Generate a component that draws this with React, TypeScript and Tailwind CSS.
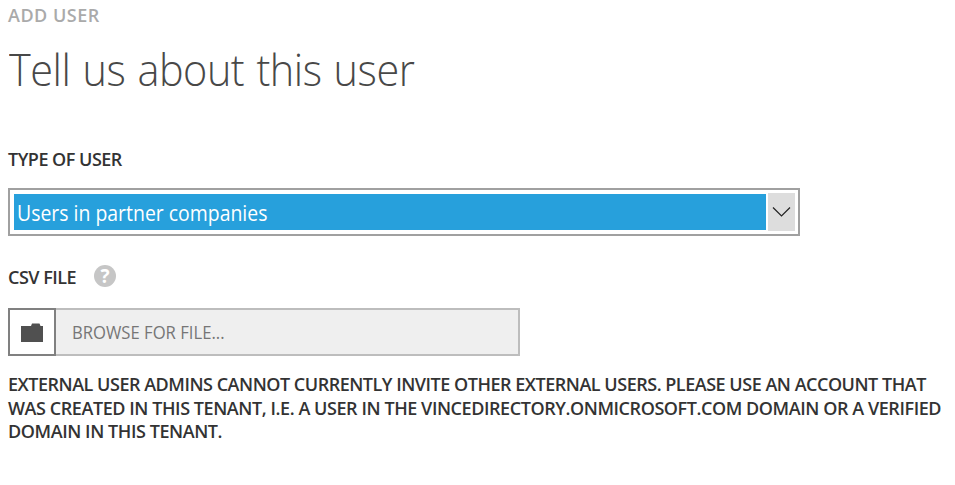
export default function App() {
  return (
    <main className="flex h-[485px] w-[955px] flex-col items-start overflow-hidden bg-white pl-2 font-['Open_Sans','Noto_Sans',sans-serif] whitespace-nowrap text-[#333]">
      <p className="mt-[3px] h-[25px] text-[18px] leading-6 font-semibold tracking-[0.5px] text-[#aaa]">ADD USER</p>
      <h1 className="mt-[9px] ml-px h-[65px] origin-left scale-x-[0.92] text-[45px] leading-[64px] font-light tracking-[-0.5px] text-[#484848] [word-spacing:2px]">
        Tell us about this user
      </h1>
      <label className="mt-[45px] h-[25px] text-[18px] leading-6 font-semibold tracking-[-0.5px]">TYPE OF USER</label>

      <button className="mt-4 flex h-12 w-[792px] items-stretch border-2 border-[#a0a0a0] bg-white p-[3px] text-left">
        <span className="my-px ml-px flex w-[752px] items-center bg-[#27a0dc] pt-0.5 pl-[3px] text-[21px] leading-6 text-white">
          <span className="origin-left scale-x-[0.925]">Users in partner companies</span>
        </span>
        <span className="ml-0.5 flex w-[27px] items-center justify-center bg-[#ddd]">
          <svg width="19" height="12" viewBox="0 0 19 12" fill="none" stroke="#222" strokeWidth="1.2">
            <path d="M1 1.5 9.5 10 18 1.5" />
          </svg>
        </span>
      </button>

      <div className="mt-[28px] flex h-6 items-center">
        <label className="w-[86px] pt-0.5 text-[18px] leading-6 font-semibold tracking-[-0.5px]">CSV FILE</label>
        <span className="flex h-[22px] w-[22px] items-center justify-center rounded-full bg-[#c6c6c6] text-[19px] leading-none font-bold text-white">
          ?
        </span>
      </div>

      <div className="mt-5 flex h-12 w-[512px]">
        <button className="flex w-12 items-center justify-center border-2 border-[#808080] bg-white">
          <svg width="22" height="19" viewBox="0 0 22 19" fill="#505050">
            <path d="M0 3h10l1-2.5h7.5l1 2.5H22v16H0z" />
          </svg>
        </button>
        <span className="flex flex-1 items-center border-2 border-l-0 border-[#bdbdbd] bg-[#efefef] pl-4 text-[18px] leading-6 text-[#767676]">
          <span className="origin-left scale-x-[0.925]">BROWSE FOR FILE...</span>
        </span>
      </div>

      <div className="mt-[17px] text-[18px] leading-[23.5px] font-semibold">
        <p className="tracking-[-0.48px]">EXTERNAL USER ADMINS CANNOT CURRENTLY INVITE OTHER EXTERNAL USERS. PLEASE USE AN ACCOUNT THAT</p>
        <p className="tracking-[-0.43px]">WAS CREATED IN THIS TENANT, I.E. A USER IN THE VINCEDIRECTORY.ONMICROSOFT.COM DOMAIN OR A VERIFIED</p>
        <p className="tracking-[-0.43px]">DOMAIN IN THIS TENANT.</p>
      </div>
    </main>
  );
}
